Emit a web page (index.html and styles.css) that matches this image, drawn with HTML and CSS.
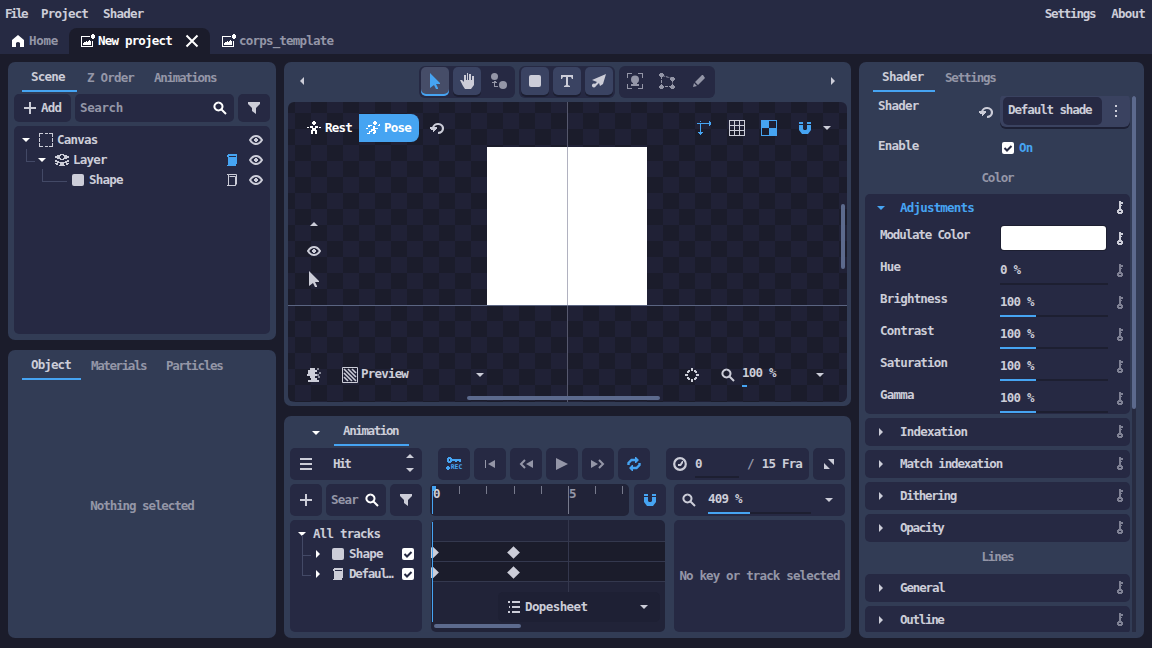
FILE: index.html
```html
<!DOCTYPE html>
<html lang="en">

<head>
    <meta charset="UTF-8">
    <meta name="viewport" content="width=device-width, initial-scale=1.0">
    <title>New project</title>
    <link rel="stylesheet" href="styles.css">
</head>

<body>
    <!-- Icon sprite -->
    <svg class="sprite">
        <symbol id="home" viewBox="0 0 14 14"><path d="M7 1L13 6V13H9V9Q7 7 5 9V13H1V6Z" /></symbol>
        <symbol id="image" viewBox="0 0 16 16"><path d="M1 3H10V4H2V13H12V8H13V14H1ZM3 12V10H4V9H6V8H7V9H8V8H9V7H10V8H11V12ZM12 1H14V2H15V5H14V6H12V5H11V2H12Z" /></symbol>
        <symbol id="close" viewBox="0 0 14 14"><path d="M1.5 1.5L12.5 12.5M12.5 1.5L1.5 12.5" fill="none" stroke="currentColor" stroke-width="2" /></symbol>
        <symbol id="plus" viewBox="0 0 14 14"><path d="M6 1H8V6H13V8H8V13H6V8H1V6H6Z" /></symbol>
        <symbol id="search" viewBox="0 0 14 14"><path d="M5.5 1.5A4 4 0 1 1 5.4 1.5M8.5 8.5L13 13" fill="none" stroke="currentColor" stroke-width="2" /></symbol>
        <symbol id="filter" viewBox="0 0 14 14"><path d="M1 1H13V3L9 7V13L5 10V7L1 3Z" /></symbol>
        <symbol id="down" viewBox="0 0 8 4"><path d="M0 0H8L4 4Z" /></symbol>
        <symbol id="up" viewBox="0 0 8 4"><path d="M0 4H8L4 0Z" /></symbol>
        <symbol id="left" viewBox="0 0 4 8"><path d="M4 0V8L0 4Z" /></symbol>
        <symbol id="right" viewBox="0 0 4 8"><path d="M0 0V8L4 4Z" /></symbol>
        <symbol id="frame" viewBox="0 0 14 14"><path d="M0 0H4V1H1V4H0ZM6 0H9V1H6ZM10 0H14V4H13V1H10ZM0 5H1V9H0ZM13 5H14V9H13ZM0 10H1V13H4V14H0ZM6 13H9V14H6ZM13 10H14V14H10V13H13Z" /></symbol>
        <symbol id="layers" viewBox="0 0 14 14"><path d="M5 1H9V2H12V3H14V5H12V6H9V7H5V6H2V5H0V3H2V2H5ZM0 7H2V8H4V9H10V8H12V7H14V9H12V10H9V12H10V13H4V12H5V10H2V9H0ZM0 10H3V12H1V11H0ZM11 10H14V11H13V12H11Z" /><path d="M6 2H8V3H9V5H8V6H6V5H5V3H6Z" fill="#262a43" /></symbol>
        <symbol id="eye" viewBox="0 0 14 10"><path d="M1 5Q3.500 1 7 1T13 5Q10.500 9 7 9T1 5Z" fill="none" stroke="currentColor" stroke-width="2" /><path d="M6 3H8V4H9V6H8V7H6V6H5V4H6Z" /></symbol>
        <symbol id="cube" viewBox="0 0 12 14"><path d="M2.500 3.500V1.500H10.500V11M1 1.500H2.500M3.500 3.500H9.500V12.500H1M2.500 3V12.500M10.500 10.500L9.500 12.500" fill="none" stroke="currentColor" /></symbol>
        <symbol id="cubefill" viewBox="0 0 12 14"><path d="M2 1H11V11H10V13H1V12H2V4H1V2H2ZM3 3V4H10V3Z" fill-rule="evenodd" /></symbol>
        <symbol id="block" viewBox="0 0 12 12"><rect width="12" height="12" rx="2" /></symbol>
        <symbol id="pointer" viewBox="0 0 12 16"><path d="M1 0L11 10V11H7L9 15V16H7L5 12L1 15Z" /></symbol>
        <symbol id="hand" viewBox="0 0 16 16"><path d="M1 7H3L5 9V2H7V7H8V0H9V7H10V1H12V7H13V3H15V12L12 16H6L4 13Z" /></symbol>
        <symbol id="joint" viewBox="0 0 16 16"><circle cx="3.500" cy="3.500" r="3.500" /><circle cx="12" cy="12" r="4" /><path d="M3 8H5V9H6V10H4V13H7V14H3V10H1V9H3Z" /></symbol>
        <symbol id="type" viewBox="0 0 14 14"><path d="M1 1H13V5H12L11 3H8V11L10 12V13H4V12L6 11V3H3L2 5H1Z" /></symbol>
        <symbol id="pen" viewBox="0 0 16 16"><path d="M15 1L12 11L9 13L8 10L4 14L2 13L6 9L1 7ZM3 10.500A2 2 0 1 1 2.900 10.500Z" /></symbol>
        <symbol id="mark" viewBox="0 0 16 16"><path d="M0 0H5V1H1V5H0ZM11 0H16V5H15V1H11ZM0 11H1V15H5V16H0ZM15 11H16V16H11V15H15Z" /><circle cx="8" cy="6.500" r="4" /><path d="M6 9H10V11H12V13H4V11H6Z" /></symbol>
        <symbol id="mesh" viewBox="0 0 16 16"><path d="M2.500 3V13M3 2.500L13.500 5.500V14M2 13.500H14" fill="none" stroke="currentColor" stroke-dasharray="3 1" /><path d="M1 0H4V1H5V3H4V4H1V3H0V1H1ZM12 4H15V5H16V7H15V8H12V7H11V5H12ZM1 12H4V13H5V15H4V16H1V15H0V13H1ZM12 12H15V13H16V15H15V16H12V15H11V13H12Z" /></symbol>
        <symbol id="pencil" viewBox="0 0 14 14"><path d="M10 1H11L13 4L6 11L3 8ZM2 9L5 12L1 13Z" /></symbol>
        <symbol id="rest" viewBox="0 0 14 14"><path d="M6 0H8V1H9V3H8V4H6V3H5V1H6ZM0 6H2V7H0ZM3 5H6V7H8V5H11V7H9V9H10V13H8V10H6V13H4V9H5V7H3ZM12 6H14V7H12Z" /></symbol>
        <symbol id="pose" viewBox="0 0 14 14"><path d="M8 0H10V1H11V3H10V4H8V3H7V1H8ZM13 3H14V5H12V4H13ZM2 4H6V5H4V6H2ZM7 5H9V7H12V8H9V9H10V12H9V13H7V11H8V10H6V11H4V13H1V12H3V10H5V8H7ZM0 7H2V8H0Z" /></symbol>
        <symbol id="reset" viewBox="0 0 14 14"><path d="M3 7A5 4.500 0 1 1 8 12" fill="none" stroke="currentColor" stroke-width="2.200" /><path d="M0 6H7V8H6V9H5V10H4V11H3V9H1V8H0Z" /></symbol>
        <symbol id="axes" viewBox="0 0 16 16"><path d="M0 3H12V1H13V2H14V5H13V6H12V4H4V12H6V13H5V14H4V15H3V14H2V13H1V12H3V4H0ZM3 1H4V2H3Z" /></symbol>
        <symbol id="grid" viewBox="0 0 16 16"><path d="M0 0H16V16H0ZM1 1V5H5V1ZM6 1V5H10V1ZM11 1V5H15V1ZM1 6V10H5V6ZM6 6V10H10V6ZM11 6V10H15V6ZM1 11V15H5V11ZM6 11V15H10V11ZM11 11V15H15V11Z" fill-rule="evenodd" /></symbol>
        <symbol id="checker" viewBox="0 0 16 16"><path d="M0 0H16V16H0ZM8 1V8H15V1ZM1 8V15H8V8Z" fill-rule="evenodd" /></symbol>
        <symbol id="magnet" viewBox="0 0 14 14"><path d="M1 1H5V3H1ZM9 1H13V3H9ZM1 4H5V8L6 9H8L9 8V4H13V9L10 13H4L1 9Z" /></symbol>
        <symbol id="mask" viewBox="0 0 14 14"><path d="M3 0H8V2H10V4H8V6H10V8H8V10H10V12H12V14H1V12H4V10H3V8H0V6H1V2H3Z" /><path d="M10 0H12V2H10ZM12 4H14V6H12ZM11 8H13V10H11ZM10 6H12V8H10Z" opacity=".6" /></symbol>
        <symbol id="hatch" viewBox="0 0 16 16"><path d="M.5.5H15.500V15.500H.5Z" fill="none" stroke="currentColor" /><path d="M2 10L6 14M2 6L10 14M2 2L14 14M6 2L14 10M10 2L14 6" fill="none" stroke="currentColor" stroke-width="1.600" /></symbol>
        <symbol id="snap" viewBox="0 0 14 14"><path d="M6 0H8V3H6ZM6 11H8V14H6ZM0 6H3V8H0ZM11 6H14V8H11ZM3 2H5V4H4V5H2V3H3ZM9 2H11V3H12V5H10V4H9ZM2 9H4V10H5V12H3V11H2ZM10 9H12V11H11V12H9V10H10Z" /></symbol>
        <symbol id="menu" viewBox="0 0 12 12"><path d="M0 0H12V2H0ZM0 5H12V7H0ZM0 10H12V12H0Z" /></symbol>
        <symbol id="record" viewBox="0 0 16 14"><path d="M2 0H5V1H6V2H15V5H13V4H11V5H9V4H6V5H5V6H2V5H1V1H2ZM3 2V4H4V2Z" fill-rule="evenodd" /><path d="M1 9H3V10H4V12H3V13H1V12H0V10H1Z" /></symbol>
        <symbol id="first" viewBox="0 0 12 10"><path d="M1 1H2V9H1ZM11 1V9L4 5Z" /></symbol>
        <symbol id="prev" viewBox="0 0 14 10"><path d="M14 1V9L7 5Z" /><path d="M6 1L2 5L6 9" fill="none" stroke="currentColor" stroke-width="2" /></symbol>
        <symbol id="play" viewBox="0 0 12 12"><path d="M0 0L12 6L0 12Z" /></symbol>
        <symbol id="next" viewBox="0 0 14 10"><path d="M0 1V9L7 5Z" /><path d="M8 1L12 5L8 9" fill="none" stroke="currentColor" stroke-width="2" /></symbol>
        <symbol id="loop" viewBox="0 0 14 14"><path d="M1.500 8V6L4.500 3H10M12.500 6V8L9.500 11H4" fill="none" stroke="currentColor" stroke-width="2.400" /><path d="M8 0H9L12 3L9 6H8ZM6 8H5L2 11L5 14H6Z" /></symbol>
        <symbol id="clock" viewBox="0 0 14 14"><circle cx="7" cy="7" r="5.800" fill="none" stroke="currentColor" stroke-width="2.200" /><path d="M9 4H10V6L8 9H5V7H7Z" /></symbol>
        <symbol id="expand" viewBox="0 0 10 10"><path d="M4 0H10V6ZM0 4L6 10H0Z" /></symbol>
        <symbol id="list" viewBox="0 0 12 12"><path d="M0 0H2V2H0ZM4 0H12V2H4ZM1 5H2V7H1ZM4 5H12V7H4ZM0 10H2V12H0ZM4 10H12V12H4Z" /></symbol>
        <symbol id="key" viewBox="0 0 8 14"><path d="M3 0H5V1H7V3H5V4H6V5H5V8H6V9H7V12H6V13H2V12H1V9H2V8H3ZM3 10V11H5V10Z" fill-rule="evenodd" /></symbol>
        <symbol id="dots" viewBox="0 0 2 12"><path d="M0 0H2V2H0ZM0 5H2V7H0ZM0 10H2V12H0Z" /></symbol>
        <symbol id="check" viewBox="0 0 12 12"><rect width="12" height="12" rx="2" fill="#fff" /><path d="M2.500 6L5 8.500L9.500 4" fill="none" stroke="#262a43" stroke-width="2" /></symbol>
    </svg>

    <!-- Top menu and project tabs -->
    <header class="header">
        <nav class="menubar">
            <span class="item file">File</span><span class="item project">Project</span><span class="item">Shader</span>
            <span class="item settings">Settings</span><span class="item">About</span>
        </nav>
        <div class="project-tabs">
            <div class="ptab home"><svg class="i14 white"><use href="#home" /></svg><span>Home</span></div>
            <div class="ptab active"><svg class="i16"><use href="#image" /></svg><span>New project</span><svg class="i14 close"><use href="#close" /></svg></div>
            <div class="ptab template"><svg class="i16 white"><use href="#image" /></svg><span>corps_template</span></div>
        </div>
    </header>

    <main class="workspace">
        <div class="col-left">
            <section class="panel scene">
                <div class="tabs">
                    <span class="tab on">Scene</span><span class="tab zorder">Z Order</span><span class="tab narrow">Animations</span>
                </div>
                <div class="tools">
                    <div class="box add"><svg class="i14"><use href="#plus" /></svg>Add</div>
                    <div class="box search"><span>Search</span><svg class="i14 white"><use href="#search" /></svg></div>
                    <div class="box filter"><svg class="i14"><use href="#filter" /></svg></div>
                </div>
                <div class="box tree">
                    <div class="node">
                        <svg class="cv white"><use href="#down" /></svg><svg class="i14 frame"><use href="#frame" /></svg><span>Canvas</span>
                        <svg class="eye"><use href="#eye" /></svg>
                    </div>
                    <div class="node n2">
                        <svg class="cv white"><use href="#down" /></svg><svg class="i14 layers"><use href="#layers" /></svg><span>Layer</span>
                        <svg class="cube blue"><use href="#cubefill" /></svg><svg class="eye"><use href="#eye" /></svg>
                    </div>
                    <div class="node n3">
                        <svg class="i12"><use href="#block" /></svg><span>Shape</span>
                        <svg class="cube"><use href="#cube" /></svg><svg class="eye"><use href="#eye" /></svg>
                    </div>
                </div>
            </section>
            <section class="panel object">
                <div class="tabs">
                    <span class="tab on">Object</span><span class="tab materials">Materials</span><span class="tab">Particles</span>
                </div>
                <p class="empty">Nothing selected</p>
            </section>
        </div>

        <div class="col-center">
            <section class="panel canvas-panel">
                <div class="toolbar">
                    <svg class="ch"><use href="#left" /></svg>
                    <div class="groups">
                        <div class="group">
                            <span class="tool picked"><svg class="pointer"><use href="#pointer" /></svg></span>
                            <span class="tool"><svg class="i16"><use href="#hand" /></svg></span>
                            <span class="tool off"><svg class="i16"><use href="#joint" /></svg></span>
                        </div>
                        <div class="group">
                            <span class="tool"><svg class="i12"><use href="#block" /></svg></span>
                            <span class="tool"><svg class="i14"><use href="#type" /></svg></span>
                            <span class="tool"><svg class="i16"><use href="#pen" /></svg></span>
                        </div>
                        <div class="group">
                            <span class="tool off"><svg class="i16"><use href="#mark" /></svg></span>
                            <span class="tool off"><svg class="i16"><use href="#mesh" /></svg></span>
                            <span class="tool off"><svg class="i14"><use href="#pencil" /></svg></span>
                        </div>
                    </div>
                    <svg class="ch"><use href="#right" /></svg>
                </div>
                <div class="viewport">
                    <div class="artboard"></div>
                    <div class="axis-x"></div>
                    <div class="axis-y"></div>
                    <div class="view-top">
                        <div class="mode"><svg class="i14"><use href="#rest" /></svg>Rest</div>
                        <div class="mode pose"><svg class="i14"><use href="#pose" /></svg>Pose</div>
                        <svg class="i14 reset"><use href="#reset" /></svg>
                        <div class="view-opts">
                            <svg class="i16 blue"><use href="#axes" /></svg>
                            <svg class="i16"><use href="#grid" /></svg>
                            <svg class="i16 blue"><use href="#checker" /></svg>
                            <svg class="i14 blue magnet"><use href="#magnet" /></svg>
                            <svg class="cv"><use href="#down" /></svg>
                        </div>
                    </div>
                    <div class="view-side">
                        <svg class="cv"><use href="#up" /></svg>
                        <svg class="eye"><use href="#eye" /></svg>
                        <svg class="pointer"><use href="#pointer" /></svg>
                    </div>
                    <div class="view-bottom">
                        <svg class="i14"><use href="#mask" /></svg>
                        <svg class="i16 hatch"><use href="#hatch" /></svg>
                        <span class="preview">Preview</span>
                        <svg class="cv"><use href="#down" /></svg>
                        <svg class="i14 snap"><use href="#snap" /></svg>
                        <svg class="i14 zoom"><use href="#search" /></svg>
                        <span class="percent">100 %</span>
                        <svg class="cv"><use href="#down" /></svg>
                    </div>
                    <div class="thumb-v"></div>
                    <div class="thumb-h"></div>
                </div>
            </section>

            <section class="panel anim">
                <div class="anim-head"><svg class="cv white"><use href="#down" /></svg><span class="tab on">Animation</span></div>
                <div class="row controls">
                    <div class="box clip"><svg class="i12"><use href="#menu" /></svg><span>Hit</span>
                        <div class="spin"><svg class="cv"><use href="#up" /></svg><svg class="cv"><use href="#down" /></svg></div>
                    </div>
                    <div class="transport">
                        <div class="box sq blue rec"><svg><use href="#record" /></svg><small>REC</small></div>
                        <div class="box sq"><svg class="t1"><use href="#first" /></svg></div>
                        <div class="box sq"><svg class="t2"><use href="#prev" /></svg></div>
                        <div class="box sq"><svg class="i12"><use href="#play" /></svg></div>
                        <div class="box sq"><svg class="t2"><use href="#next" /></svg></div>
                        <div class="box sq blue"><svg class="i14"><use href="#loop" /></svg></div>
                    </div>
                    <div class="box frames"><svg class="i14"><use href="#clock" /></svg><span class="current">0</span><span class="slash">/</span><span>15 Fra</span></div>
                    <div class="box sq bright"><svg class="i10"><use href="#expand" /></svg></div>
                </div>
                <div class="row second">
                    <div class="box sq bright"><svg class="i14"><use href="#plus" /></svg></div>
                    <div class="box search sear"><span>Sear</span><svg class="i14 white"><use href="#search" /></svg></div>
                    <div class="box sq bright"><svg class="i14"><use href="#filter" /></svg></div>
                    <div class="box ruler">
                        <div class="tick head"><span>0</span></div>
                        <div class="tick"></div>
                        <div class="tick"></div>
                        <div class="tick"></div>
                        <div class="tick"></div>
                        <div class="tick major"><span>5</span></div>
                        <div class="tick"></div>
                        <div class="tick"></div>
                    </div>
                    <div class="box sq blue"><svg class="i14"><use href="#magnet" /></svg></div>
                    <div class="box tzoom"><svg class="i14"><use href="#search" /></svg><span class="slider" style="--fill: 41%">409 %</span><svg class="cv"><use href="#down" /></svg></div>
                </div>
                <div class="row third">
                    <div class="box tracks">
                        <div class="track"><svg class="cv white"><use href="#down" /></svg><span>All tracks</span></div>
                        <div class="track sub"><svg class="ch white"><use href="#right" /></svg><svg class="i12"><use href="#block" /></svg><span>Shape</span><svg class="i12 tick-box"><use href="#check" /></svg></div>
                        <div class="track sub"><svg class="ch white"><use href="#right" /></svg><svg class="cube"><use href="#cubefill" /></svg><span class="narrow">Defaul…</span><svg class="i12 tick-box"><use href="#check" /></svg></div>
                    </div>
                    <div class="box timeline">
                        <div class="lane"></div>
                        <div class="lane keys"><i class="kf"></i><i class="kf"></i></div>
                        <div class="lane keys"><i class="kf"></i><i class="kf"></i></div>
                        <div class="five"></div>
                        <div class="dope"><svg class="i12"><use href="#list" /></svg><span>Dopesheet</span><svg class="cv"><use href="#down" /></svg></div>
                        <div class="thumb-t"></div>
                    </div>
                    <div class="box nokey">No key or track selected</div>
                </div>
            </section>
        </div>

        <section class="panel inspector">
            <div class="tabs">
                <span class="tab on">Shader</span><span class="tab">Settings</span>
            </div>
            <div class="scroll">
                <div class="props">
                    <div class="prop shader">
                        <label>Shader</label><svg class="i14"><use href="#reset" /></svg>
                        <div class="picker"><span>Default shade</span><svg class="dots"><use href="#dots" /></svg></div>
                    </div>
                    <div class="prop enable"><label>Enable</label><svg class="i12"><use href="#check" /></svg><span class="blue">On</span></div>
                    <h3>Color</h3>
                    <div class="box adjust">
                        <div class="fold-head blue"><svg class="cv"><use href="#down" /></svg><span>Adjustments</span><svg class="key lit"><use href="#key" /></svg></div>
                        <div class="value"><label class="tight">Modulate Color</label><div class="swatch"></div><svg class="key lit"><use href="#key" /></svg></div>
                        <div class="value"><label>Hue</label><span class="slider" style="--fill: 0%">0 %</span><svg class="key"><use href="#key" /></svg></div>
                        <div class="value"><label>Brightness</label><span class="slider" style="--fill: 33.3%">100 %</span><svg class="key"><use href="#key" /></svg></div>
                        <div class="value"><label>Contrast</label><span class="slider" style="--fill: 33.3%">100 %</span><svg class="key"><use href="#key" /></svg></div>
                        <div class="value"><label>Saturation</label><span class="slider" style="--fill: 33.3%">100 %</span><svg class="key"><use href="#key" /></svg></div>
                        <div class="value"><label>Gamma</label><span class="slider" style="--fill: 33.3%">100 %</span><svg class="key"><use href="#key" /></svg></div>
                    </div>
                    <div class="box fold"><svg class="ch"><use href="#right" /></svg><span>Indexation</span><svg class="key"><use href="#key" /></svg></div>
                    <div class="box fold"><svg class="ch"><use href="#right" /></svg><span class="tight">Match indexation</span><svg class="key"><use href="#key" /></svg></div>
                    <div class="box fold"><svg class="ch"><use href="#right" /></svg><span class="narrow">Dithering</span><svg class="key"><use href="#key" /></svg></div>
                    <div class="box fold"><svg class="ch"><use href="#right" /></svg><span class="narrow">Opacity</span><svg class="key"><use href="#key" /></svg></div>
                    <h3 class="lines">Lines</h3>
                    <div class="box fold"><svg class="ch"><use href="#right" /></svg><span class="tight">General</span><svg class="key"><use href="#key" /></svg></div>
                    <div class="box fold"><svg class="ch"><use href="#right" /></svg><span class="narrow">Outline</span><svg class="key"><use href="#key" /></svg></div>
                </div>
                <div class="track-v"><div class="thumb"></div></div>
            </div>
        </section>
    </main>
</body>

</html>
```
FILE: styles.css
```css
:root {
    --bg: #1b1c2b;
    --bar: #262a43;
    --panel: #323c55;
    --box: #262943;
    --button: #3a4362;
    --thumb: #5c6a8d;
    --text: #cccdd8;
    --muted: #9496a7;
    --blue: #46a4f2;
}

* {
    margin: 0;
    padding: 0;
    box-sizing: border-box;
}

body {
    width: 1152px;
    height: 648px;
    overflow: hidden;
    background: var(--bg);
    color: var(--text);
    font: bold 12.5px/20px "DejaVu Sans Mono", monospace;
    letter-spacing: -0.8px;
    white-space: nowrap;
}

svg {
    display: block;
    flex: none;
    fill: currentColor;
}

.sprite {
    position: absolute;
    width: 0;
    height: 0;
}

.i10 { width: 10px; height: 10px; }
.i12 { width: 12px; height: 12px; }
.i14 { width: 14px; height: 14px; }
.i16 { width: 16px; height: 16px; }
.cv { width: 8px; height: 4px; }
.ch { width: 4px; height: 8px; }
.eye { width: 14px; height: 10px; }
.cube { width: 12px; height: 14px; }
.key { width: 8px; height: 14px; }
.dots { width: 2px; height: 12px; }
.pointer { width: 12px; height: 16px; }

.white { color: #fff; }
.blue { color: var(--blue); }
.narrow { letter-spacing: -1.3px; }
.tight { letter-spacing: -1.15px; }

/* Header */
.header {
    height: 54px;
    background: var(--bar);
}

.menubar {
    display: flex;
    height: 28px;
    padding: 4px 7px 0 5px;
}

.file { width: 36px; letter-spacing: -2.2px; }
.project { width: 62px; }
.settings { margin-left: auto; margin-right: 16px; letter-spacing: -1.2px; }

.project-tabs {
    display: flex;
    height: 26px;
}

.ptab {
    display: flex;
    align-items: center;
    color: var(--muted);
}

.home {
    width: 69px;
    padding-left: 11px;
    gap: 4px;
    letter-spacing: -0.3px;
}

.ptab.active {
    width: 141px;
    padding-left: 11px;
    gap: 2px;
    border-radius: 8px 8px 0 0;
    background: var(--bg);
    color: #fff;
}

.close { margin-left: 11px; }

.template {
    padding-left: 11px;
    gap: 2px;
}

/* Columns */
.workspace {
    display: grid;
    grid-template-columns: 268px 567px 285px;
    gap: 8px;
    height: 584px;
    padding: 8px 0 0 8px;
}

.col-left, .col-center {
    display: grid;
    gap: 10px;
}

.col-left { grid-template-rows: 278px 288px; }
.col-center { grid-template-rows: 344px 222px; }

.panel {
    border-radius: 7px;
    background: var(--panel);
}

.box {
    border-radius: 5px;
    background: var(--box);
}

.tabs {
    display: flex;
    height: 30px;
    padding-left: 14px;
    color: var(--muted);
}

.tab {
    padding: 6px 10px 0;
}

.tab.on {
    height: 30px;
    padding: 5px 9px 0;
    border-bottom: 2px solid var(--blue);
    color: var(--text);
}

/* Scene panel */
.scene .tab.on { width: 55px; }
.zorder { width: 67px; }

.tools {
    display: flex;
    gap: 4px;
    padding: 2px 6px 4px;
}

.tools .box {
    display: flex;
    align-items: center;
    height: 28px;
}

.add {
    width: 57px;
    padding-left: 9px;
    gap: 4px;
}

.search {
    display: flex;
    align-items: center;
    justify-content: space-between;
    color: var(--muted);
}

.tools .search { width: 159px; padding: 0 7px 0 5px; letter-spacing: -0.4px; }
.filter { width: 32px; justify-content: center; }

.tree {
    height: 208px;
    margin: 0 6px;
    padding: 4px 7px 0 8px;
}

.node {
    display: flex;
    align-items: center;
    height: 20px;
}

.frame { margin: 0 4px 0 9px; }
.layers { margin: 0 4px 0 9px; }
.node .eye { margin-left: auto; }
.node .cube { margin-left: auto; }
.node .cube + .eye { margin-left: 11px; }

.n2::before, .n3::before {
    content: "";
    width: 8px;
    height: 12px;
    margin: -10px 3px 0 4px;
    border: solid #434966;
    border-width: 0 0 1px 1px;
}

.n3::before { width: 24px; margin: -10px 6px 0 20px; }
.n3 .i12 { margin: 0 5px 0 -1px; }

/* Object panel */
.object .tab.on { width: 59px; }
.materials { width: 75px; }
.object .tab { letter-spacing: -1.25px; }
.object .materials { letter-spacing: -1.4px; }
.object .tab.on { letter-spacing: -0.9px; }

.empty {
    margin-top: 116px;
    color: var(--muted);
    text-align: center;
    letter-spacing: -1.07px;
}

/* Canvas */
.toolbar {
    display: flex;
    align-items: center;
    justify-content: space-between;
    height: 40px;
    padding: 0 16px;
}

.toolbar .ch { margin-top: -2px; }

.groups {
    display: flex;
    gap: 4px;
    margin-top: -1px;
    margin-left: -1px;
}

.group {
    display: flex;
    gap: 4px;
    height: 32px;
    padding: 1px 2px;
    border-radius: 6px;
    background: var(--box);
}

.group .tool {
    display: flex;
    align-items: center;
    justify-content: center;
    width: 28px;
    height: 28px;
    border-radius: 5px;
    background: var(--button);
    box-shadow: 0 2px 0 #1c1e31;
}

.group .tool.picked {
    background: #464d68;
    box-shadow: inset 0 -2px 0 var(--blue);
    height: 29px;
    color: var(--blue);
}

.group .tool.off {
    background: none;
    box-shadow: none;
    color: var(--muted);
}

.viewport {
    position: relative;
    width: 559px;
    height: 300px;
    margin-left: 4px;
    overflow: hidden;
    border-radius: 6px;
    background: conic-gradient(#1b1c2b 25%, #202136 0 50%, #1b1c2b 0 75%, #202136 0) 279px 203px / 32px 32px;
}

.artboard {
    position: absolute;
    left: 199px;
    top: 45px;
    width: 160px;
    height: 158px;
    background: #fff;
}

.axis-x {
    position: absolute;
    top: 203px;
    width: 100%;
    height: 1px;
    background: #5b6582;
}

.axis-y {
    position: absolute;
    left: 279px;
    width: 1px;
    height: 100%;
    background: rgba(125, 127, 150, 0.6);
}

.view-top, .view-side, .view-bottom {
    position: relative;
    display: flex;
    align-items: center;
}

.view-top {
    height: 28px;
    margin-top: 12px;
    padding: 0 16px 0 15px;
}

.mode {
    display: flex;
    align-items: center;
    gap: 4px;
    width: 56px;
    height: 28px;
    padding-left: 4px;
    color: #fff;
}

.pose {
    width: 60px;
    padding-left: 7px;
    border-radius: 0 8px 8px 0;
    background: var(--blue);
}

.reset { margin-left: 11px; }

.view-opts {
    display: flex;
    align-items: center;
    gap: 16px;
    margin-left: auto;
}

.magnet { margin-left: 5px; margin-right: -5px; }

.view-side {
    flex-direction: column;
    width: 52px;
    margin-top: 80px;
    gap: 20px;
}

.view-side .pointer { margin-top: -5px; }

.view-bottom {
    height: 30px;
    margin-top: 73px;
    padding: 0 23px 0 19px;
}

.hatch { margin: 0 3px 0 21px; }
.preview { width: 115px; padding-bottom: 2px; }
.snap { margin-left: 201px; }
.zoom { margin: 0 7px 0 22px; }

.percent {
    height: 24px;
    border-bottom: 2px solid transparent;
    border-image: linear-gradient(90deg, var(--blue) 6px, transparent 0) 1;
    margin-right: auto;
}

.thumb-v, .thumb-h, .thumb-t {
    position: absolute;
    border-radius: 2px;
    background: var(--thumb);
}

.thumb-v { right: 2px; top: 102px; width: 4px; height: 65px; }
.thumb-h { left: 179px; top: 294px; width: 193px; height: 4px; }
.thumb-t { left: 3px; top: 104px; width: 87px; height: 4px; }

/* Animation panel */
.anim { padding: 0 6px; }

.anim-head {
    display: flex;
    height: 32px;
    padding-left: 22px;
}

.anim-head .cv { margin: 15px 14px 0 0; }
.anim-head .tab { letter-spacing: -1.4px; width: 75px; }

.row {
    display: flex;
    margin-bottom: 4px;
}

.row .box {
    display: flex;
    align-items: center;
    height: 32px;
}

.row .sq {
    justify-content: center;
    width: 32px;
    color: var(--muted);
}

.row .sq.blue { color: var(--blue); }
.row .sq.bright { color: var(--text); }

.clip {
    width: 132px;
    padding: 0 8px 0 10px;
    letter-spacing: -1.9px;
}

.clip span { margin-left: 21px; }

.spin {
    display: grid;
    gap: 10px;
    margin: -3px 0 0 auto;
}

.transport {
    display: flex;
    gap: 4px;
    margin: 0 16px;
}

.row .rec { flex-direction: column; }

.rec svg { width: 16px; height: 14px; }
.rec small { font-size: 6.5px; line-height: 8px; margin: -8px -5px 0 0; letter-spacing: -0.1px; }
.t1 { width: 12px; height: 10px; }
.t2 { width: 14px; height: 10px; }

.frames {
    width: 143px;
    margin-right: 4px;
    padding-left: 7px;
}

.current {
    width: 44px;
    height: 27px;
    padding-top: 3px;
    margin: 0 8px 0 8px;
    border-bottom: 2px solid #1d1f31;
}

.slash { color: var(--muted); margin-right: 8px; }

.second { gap: 4px; }
.row .sear { width: 60px; padding: 0 7px 0 5px; }

.row .ruler {
    align-items: flex-start;
    width: 199px;
    margin: 0 1px 0 4px;
    padding: 2px 0 0 2px;
    background: #212338;
    overflow: hidden;
}

.tick {
    flex: none;
    width: 27.2px;
    height: 8px;
    border-left: 1px solid #777a8c;
    letter-spacing: 0;
    line-height: 15px;
}

.head {
    height: 28px;
    border-color: var(--blue);
    background: linear-gradient(var(--blue), var(--blue)) no-repeat 0 0 / 3px 5px;
}

.major { height: 28px; color: var(--muted); }

.tzoom {
    width: 171px;
    margin-left: 4px;
    padding: 0 12px 0 8px;
}

.slider {
    width: 103px;
    height: 27px;
    padding-top: 2px;
    border-bottom: 2px solid #1d1f31;
    border-image: linear-gradient(90deg, var(--blue) var(--fill), #1d1f31 0) 1;
}

.tzoom .slider { margin: 0 14px 0 12px; height: 28px; padding-top: 3px; }

.third .box { height: 112px; }

.row .tracks {
    flex-direction: column;
    align-items: stretch;
    width: 132px;
    margin-right: 9px;
    padding: 4px 8px;
}

.track {
    display: flex;
    align-items: center;
    height: 20px;
}

.track .cv { margin-right: 7px; }

.sub::before {
    content: "";
    width: 8px;
    height: 20px;
    margin: -18px 5px 0 4px;
    border: solid #434966;
    border-width: 0 0 1px 1px;
}

.sub .ch { margin: 0 12px 0 0; }
.sub span { margin-left: 5px; }
.tick-box { margin-left: auto; }

.row .timeline {
    position: relative;
    display: block;
    width: 234px;
    padding: 2px 0 0 1px;
    overflow: hidden;
    background: #212338;
}

.timeline::before {
    content: "";
    position: absolute;
    z-index: 1;
    left: 1px;
    top: 2px;
    width: 1px;
    height: 100px;
    background: var(--blue);
}

.lane {
    display: flex;
    align-items: center;
    height: 20px;
    border-bottom: 1px solid #34384e;
}

.keys { background: var(--bg); }

.kf {
    width: 9px;
    height: 9px;
    margin: 1px 0 0 -4px;
    background: var(--text);
    transform: rotate(45deg);
}

.kf + .kf { margin-left: 72px; }

.five {
    position: absolute;
    left: 137px;
    top: 0;
    width: 1px;
    height: 102px;
    background: #34374d;
}

.dope {
    position: relative;
    display: flex;
    align-items: center;
    width: 162px;
    height: 30px;
    margin: 10px 0 0 66px;
    padding: 0 12px 0 10px;
    border-radius: 5px;
    background: #1e2034;
}

.dope span { margin-left: 5px; letter-spacing: -0.6px; }
.dope .cv { margin-left: auto; }

.row .nokey {
    justify-content: center;
    width: 171px;
    margin-left: 9px;
    color: var(--muted);
    letter-spacing: -0.85px;
}

/* Inspector */
.inspector .tab.on { width: 62px; letter-spacing: -0.6px; }
.inspector .tab { letter-spacing: -1.2px; }

.scroll {
    display: flex;
    height: 536px;
    margin-top: 4px;
    padding-left: 6px;
    overflow: hidden;
}

.props {
    width: 265px;
    margin-right: 2px;
}

.track-v {
    width: 4px;
    background: #272b41;
}

.thumb {
    height: 313px;
    border-radius: 2px;
    background: var(--thumb);
}

.prop {
    display: flex;
    height: 36px;
    padding-left: 13px;
}

.prop label { width: 101px; }
.shader svg.i14 { margin: 9px 7px 0 0; }

.picker {
    display: flex;
    align-items: center;
    width: 130px;
    height: 33px;
    padding-left: 3px;
    margin-top: -2px;
    border-radius: 6px;
    background: #3a4260;
    box-shadow: 0 2px 0 #1d2035;
    letter-spacing: -1.1px;
}

.picker span {
    width: 99px;
    height: 28px;
    padding: 3px 5px;
    border-radius: 5px;
    background: var(--box);
}

.picker .dots { margin-left: 13px; }

.enable label { width: 124px; padding-top: 4px; }
.enable svg { margin: 10px 5px 0 0; }
.enable span { padding-top: 6px; }

h3 {
    height: 26px;
    color: var(--muted);
    font: inherit;
    text-align: center;
    letter-spacing: -1.1px;
}

.adjust { height: 220px; }

.fold-head, .fold, .value {
    display: flex;
    align-items: center;
}

.fold-head {
    height: 28px;
    padding: 0 6px 0 12px;
}

.fold-head span { margin-left: 15px; }
.key { margin-left: auto; color: #7f8194; }
.key.lit { color: var(--text); }

.value {
    height: 32px;
    padding: 0 6px 0 15px;
}

.value .key { margin-top: 2px; }

.value label {
    width: 120px;
    height: 26px;
}

.swatch {
    width: 105px;
    height: 24px;
    margin-left: 1px;
    border-radius: 3px;
    background: #fff;
    box-shadow: 0 0 0 1px #1d1f31;
}

.value .slider {
    width: 108px;
    height: 28px;
    margin-top: 1px;
    padding-top: 3px;
}

.fold {
    height: 28px;
    margin-top: 4px;
    padding: 0 6px 0 14px;
}

.fold span { margin-left: 17px; }
h3.lines { height: 28px; padding-top: 5px; }
```
